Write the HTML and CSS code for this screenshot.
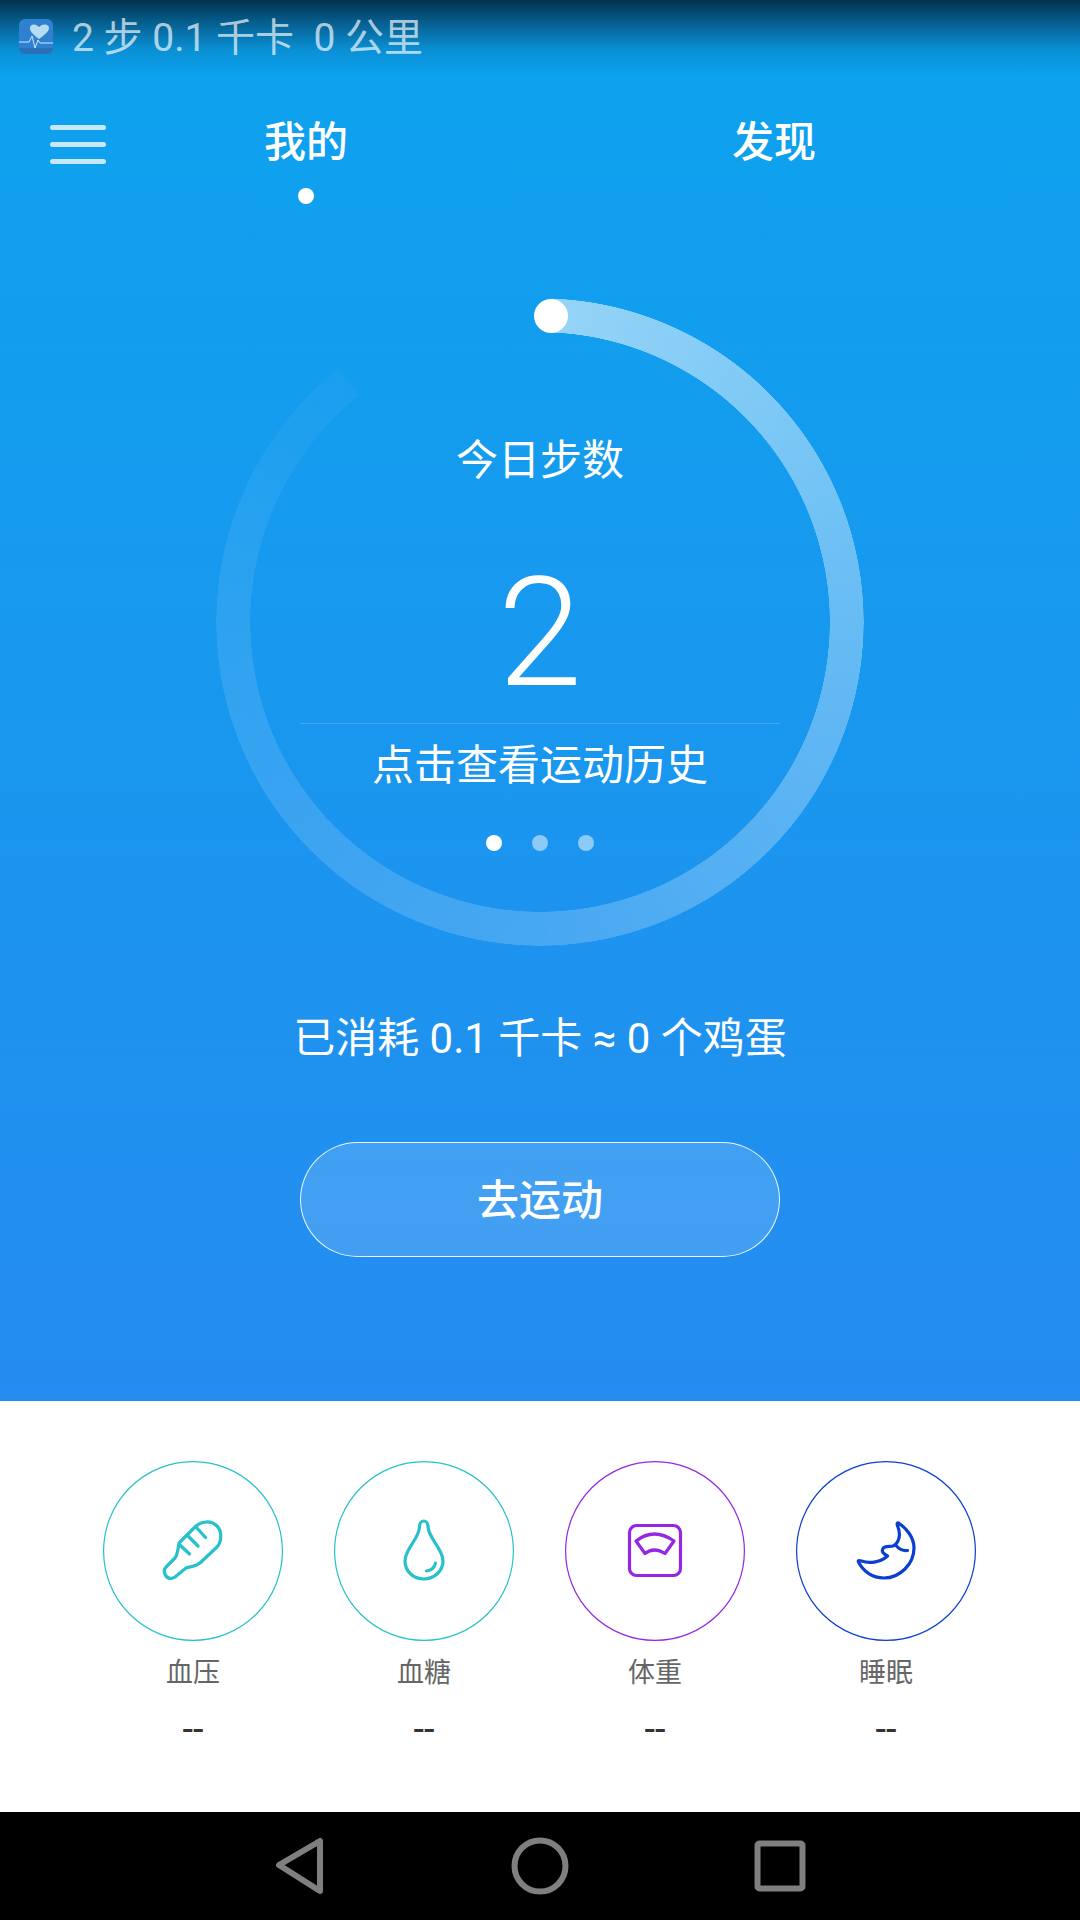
FILE: index.html
```html
<!DOCTYPE html>
<html lang="zh-CN">

<head>
    <meta charset="utf-8">
    <title>今日步数</title>
    <link rel="stylesheet" href="styles.css">
</head>

<body>
    <div class="page">
        <section class="hero">
            <!-- Status bar -->
            <div class="status">
                <svg class="app-icon" width="34" height="35" viewBox="0 0 34 35">
                    <rect x="0" y="0" width="34" height="35" rx="6" fill="#2f80d0" />
                    <path d="M0 29h34v0a6 6 0 0 1-6 6H6a6 6 0 0 1-6-6z" fill="#2a70b8" />
                    <path d="M20 20 C13 15 11 12 11 9 C11 5 16 4 20 8 C24 4 30 5 30 9 C30 12 27 15 20 20Z" fill="#b6dcef" />
                    <path d="M0 23H10L13 17L16 29L19 21L21 24H34" fill="none" stroke="#cfe8f5" stroke-width="1" />
                </svg>
                <span class="status-text">2 步 0.1 千卡 &nbsp;0 公里</span>
            </div>

            <!-- Tabs -->
            <div class="tabs">
                <div class="menu-icon"><i></i><i></i><i></i></div>
                <div class="tab tab-left">我的<b class="tab-dot"></b></div>
                <div class="tab tab-right">发现</div>
            </div>

            <!-- Step ring -->
            <div class="ring">
                <div class="ring-track"></div>
                <div class="ring-knob"></div>
                <div class="ring-title">今日步数</div>
                <div class="ring-count">2</div>
                <div class="ring-line"></div>
                <div class="ring-link">点击查看运动历史</div>
                <div class="pager">
                    <span class="pager-dot active"></span>
                    <span class="pager-dot"></span>
                    <span class="pager-dot"></span>
                </div>
            </div>

            <p class="burned">已消耗 0.1 千卡 ≈ 0 个鸡蛋</p>
            <div class="go-btn">去运动</div>
        </section>

        <!-- Health items -->
        <section class="items">
            <div class="item">
                <svg class="item-circle teal" viewBox="0 0 180 180">
                    <circle class="outline" cx="90" cy="90" r="89.4" />
                    <path d="M76 82L92 66C98 60 108 59 114 65C119 70 119 80 114 86L97 102C92 106 88 105 83 107L72 116C68 119 63 117 62 113C60 109 62 107 65 104L72 97C75 93 75 87 76 82Z" />
                    <path d="M92.5 65.5L102.5 76.5M85 75L95 85M77.5 84.5L86.5 93" />
                </svg>
                <div class="item-name">血压</div>
                <div class="item-value">--</div>
            </div>
            <div class="item">
                <svg class="item-circle teal" viewBox="0 0 180 180">
                    <circle class="outline" cx="90" cy="90" r="89.4" />
                    <path d="M85.5 66C85.5 58 94 58 94 66C95 78 109 88 109 100C109 110 100 118 90 118C79 118 71 110 71 100C71 88 85 78 85.5 66Z" />
                    <path d="M92.5 110C97 109.5 100.5 107 101.5 102" />
                </svg>
                <div class="item-name">血糖</div>
                <div class="item-value">--</div>
            </div>
            <div class="item">
                <svg class="item-circle purple" viewBox="0 0 180 180">
                    <circle class="outline" cx="90" cy="90" r="89.4" />
                    <rect x="64.5" y="64.5" width="51" height="50" rx="7" />
                    <path d="M71 80Q89 66 109 80L100 92.5Q89 85.5 80 92.5Z" />
                </svg>
                <div class="item-name">体重</div>
                <div class="item-value">--</div>
            </div>
            <div class="item">
                <svg class="item-circle blue" viewBox="0 0 180 180">
                    <circle class="outline" cx="90" cy="90" r="89.4" />
                    <path d="M102.5 62C110 67 118 76 118 87C118 103 104 117 88 117C76 117 67 110 62.5 101C61.5 99 63.5 99.5 65.5 100C74 103 85 101 91.5 95C88 93 85 91 87 87.5C89 84.5 94 86 97 85C103 82 105 74 102 66C101 64 100.5 61 102.5 62Z" />
                    <path d="M100 84.5C103 88 107 90 111.5 89.5" />
                </svg>
                <div class="item-name">睡眠</div>
                <div class="item-value">--</div>
            </div>
        </section>

        <!-- Android nav bar -->
        <nav class="navbar">
            <svg class="nav-icons" width="1080" height="108" viewBox="0 0 1080 108">
                <path d="M279 53L320 29V79Z" />
                <circle cx="540" cy="54" r="25.5" />
                <rect x="757.5" y="31.5" width="45" height="45" rx="2" />
            </svg>
        </nav>
    </div>
</body>

</html>
```

FILE: styles.css
```css
* {
    box-sizing: border-box;
}

html,
body {
    margin: 0;
    padding: 0;
}

body {
    font-family: Roboto, "Noto Sans CJK SC", sans-serif;
    color: #fff;
}

.page {
    width: 1080px;
    height: 1920px;
    display: flex;
    flex-direction: column;
    overflow: hidden;
}

/* Blue top part */
.hero {
    height: 1401px;
    background: linear-gradient(180deg, #0ca3ee 0%, #258cf0 100%);
    display: flex;
    flex-direction: column;
    align-items: center;
}

.status {
    width: 100%;
    height: 76px;
    padding: 0 0 4px 19px;
    display: flex;
    align-items: center;
    gap: 19px;
    background: linear-gradient(180deg, #03314d 0%, #065f8f 30%, #0a8fd4 65%, #0ca3ee 100%);
}

.app-icon {
    flex: none;
}

.status-text {
    margin-top: -5px;
    font-size: 39px;
    color: rgba(255, 255, 255, 0.68);
    white-space: pre;
}

.tabs {
    width: 100%;
    height: 222px;
    display: flex;
    align-items: flex-start;
    padding: 40px 0 0 50px;
}

.menu-icon {
    width: 56px;
    margin-top: 9px;
    display: flex;
    flex-direction: column;
    gap: 12px;
}

.menu-icon i {
    display: block;
    height: 5px;
    border-radius: 3px;
    background: #c5e8fc;
}

.tab {
    position: relative;
    width: 90px;
    margin-top: 1px;
    font-size: 42px;
    font-weight: 500;
    line-height: 52px;
    text-align: center;
}

.tab-left {
    margin-left: 155px;
}

.tab-right {
    margin-left: 378px;
}

.tab-dot {
    position: absolute;
    left: 37px;
    top: 71px;
    width: 16px;
    height: 16px;
    border-radius: 50%;
    background: #fff;
}

.ring {
    position: relative;
    width: 648px;
    height: 648px;
    padding-top: 135px;
    display: flex;
    flex-direction: column;
    align-items: center;
}

.ring-track {
    position: absolute;
    inset: 0;
    border-radius: 50%;
    background: conic-gradient(from 2deg, rgba(255, 255, 255, 0.56) 0deg, rgba(255, 255, 255, 0.34) 90deg, rgba(255, 255, 255, 0.19) 180deg, rgba(255, 255, 255, 0.11) 260deg, rgba(255, 255, 255, 0.03) 319deg, transparent 320deg);
    -webkit-mask: radial-gradient(circle, transparent 289.5px, #000 290px, #000 323.5px, transparent 324px);
    mask: radial-gradient(circle, transparent 289.5px, #000 290px, #000 323.5px, transparent 324px);
}

.ring-knob {
    position: absolute;
    left: 318px;
    top: 1px;
    width: 34px;
    height: 34px;
    border-radius: 50%;
    background: #fff;
}

.ring-title,
.ring-link {
    position: relative;
    font-size: 42px;
    line-height: 56px;
}

.ring-count {
    position: relative;
    margin-top: 69px;
    font-size: 152px;
    font-weight: 300;
    line-height: 150px;
}

.ring-line {
    position: relative;
    width: 480px;
    height: 1px;
    margin-top: 15px;
    background: rgba(255, 255, 255, 0.18);
}

.ring-link {
    margin-top: 14px;
}

.pager {
    position: relative;
    margin-top: 41px;
    display: flex;
    gap: 30px;
}

.pager-dot {
    width: 16px;
    height: 16px;
    border-radius: 50%;
    background: rgba(255, 255, 255, 0.5);
}

.pager-dot.active {
    background: #fff;
}

.burned {
    margin: 65px 0 0;
    font-size: 42px;
    line-height: 56px;
}

.go-btn {
    width: 480px;
    height: 115px;
    margin-top: 75px;
    padding-bottom: 6px;
    display: flex;
    align-items: center;
    justify-content: center;
    border: 1px solid rgba(255, 255, 255, 0.9);
    border-radius: 58px;
    background: rgba(255, 255, 255, 0.15);
    font-size: 42px;
    font-weight: 500;
}

/* White bottom part */
.items {
    flex: 1;
    background: #fff;
    padding: 60px 1px 0 0;
    display: flex;
    justify-content: center;
    gap: 51px;
}

.item {
    width: 180px;
    text-align: center;
}

.item-circle {
    display: block;
    width: 180px;
    height: 180px;
    fill: none;
    stroke-width: 3.2;
    stroke-linecap: round;
    stroke-linejoin: round;
}

.item-circle .outline {
    stroke-width: 1.2;
}

.teal {
    stroke: #26c1c9;
}

.purple {
    stroke: #9426e4;
}

.blue {
    stroke: #0a3fd0;
}

.item-name {
    margin-top: 15px;
    font-size: 27px;
    line-height: 34px;
    color: #666;
}

.item-value {
    margin-top: 20px;
    font-size: 38px;
    line-height: 38px;
    color: #333;
}

.navbar {
    height: 108px;
    flex: none;
    background: #000;
}

.nav-icons {
    display: block;
    fill: none;
    stroke: #7f7f7f;
    stroke-width: 6;
    stroke-linejoin: round;
}
```
